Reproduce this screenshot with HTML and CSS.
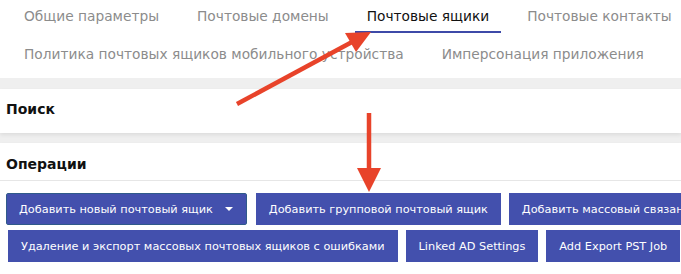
FILE: index.html
```html
<!DOCTYPE html>
<html lang="ru">

<head>
  <meta charset="UTF-8">
  <meta name="viewport" content="width=device-width, initial-scale=1.0">
  <title>Почтовые ящики</title>
  <link rel="stylesheet" href="styles.css">
</head>

<body>
  <div class="tabs">
    <div class="tab">Общие параметры</div>
    <div class="tab">Почтовые домены</div>
    <div class="tab active">Почтовые ящики</div>
    <div class="tab">Почтовые контакты</div>
    <div class="tab">Политика почтовых ящиков мобильного устройства</div>
    <div class="tab">Имперсонация приложения</div>
  </div>

  <div class="content">
    <div class="panel">
      <div class="panel-title">Поиск</div>
    </div>
    <div class="panel">
      <div class="panel-title bordered">Операции</div>
      <div class="actions">
        <div class="button-row">
          <div class="btn-group">
            <div class="button">Добавить новый почтовый ящик <span class="caret"></span></div>
          </div>
          <div class="button">Добавить групповой почтовый ящик</div>
          <div class="button">Добавить массовый связанный почтовый ящик</div>
        </div>
        <div class="button-row ml-2">
          <div class="button">Удаление и экспорт массовых почтовых ящиков с ошибками</div>
          <div class="button">Linked AD Settings</div>
          <div class="button">Add Export PST Job</div>
        </div>
      </div>
    </div>
  </div>

  <!-- annotation arrows -->
  <svg class="arrows" width="681" height="274" viewBox="0 0 681 274">
    <line x1="237" y1="104" x2="352" y2="42" stroke="#e8432a" stroke-width="4.5" />
    <polygon points="371,32 345,33 356,52" fill="#e8432a" />
    <line x1="369" y1="113" x2="369" y2="170" stroke="#e8432a" stroke-width="4.5" />
    <polygon points="357,168 381,168 369,192" fill="#e8432a" />
  </svg>
</body>

</html>
```

FILE: styles.css
```css
* {
  margin: 0;
  padding: 0;
  box-sizing: border-box;
}

body {
  font-family: "DejaVu Sans", Verdana, sans-serif;
  background: #fff;
  width: 681px;
  height: 274px;
  overflow: hidden;
  position: relative;
}

.tabs {
  display: flex;
  flex-wrap: wrap;
  column-gap: 14px;
  row-gap: 4px;
  padding: 0 0 6px 12px;
  width: 720px;
  height: 78px;
}

.tab {
  font-size: 13.75px;
  color: #8c8c8c;
  padding: 0 12px;
  height: 33px;
  line-height: 32px;
  border-bottom: 2px solid transparent;
  white-space: nowrap;
}

.tab.active {
  color: #111;
  border-bottom-color: #3e4aa8;
}

.content {
  background: #efefef;
  padding-top: 11px;
  height: 196px;
}

.panel {
  background: #fff;
  box-shadow: 0 2px 4px rgb(0 0 0 / 0.08);
  margin-bottom: 10px;
}

.panel-title {
  font-size: 14px;
  font-weight: bold;
  color: #111;
  padding: 0 6px;
  height: 44px;
  line-height: 40px;
}

.panel-title.bordered {
  height: 38px;
  line-height: 42px;
  border-bottom: 1px solid #e6e6e6;
}

.actions {
  display: flex;
  flex-direction: column;
  gap: 5px;
  padding: 12px 0 12px 6px;
}

.button-row {
  display: flex;
  gap: 8px;
}

.btn-group {
  border: 1px solid #2f5a8a;
  border-radius: 2px;
  margin-right: 1px;
}

.button {
  display: flex;
  align-items: center;
  background-color: #4350ad;
  color: #fff;
  font-size: 11.3px;
  height: 32px;
  padding: 0 13px;
  white-space: nowrap;
}

.btn-group .button {
  height: 30px;
  padding: 0 12px;
}

.caret {
  display: inline-block;
  margin-left: 12px;
  margin-right: 1px;
  border-left: 4px solid transparent;
  border-right: 4px solid transparent;
  border-top: 4px solid #fff;
}

.ml-2 {
  margin-left: 2px;
}

.arrows {
  position: absolute;
  left: 0;
  top: 0;
  pointer-events: none;
}
```
